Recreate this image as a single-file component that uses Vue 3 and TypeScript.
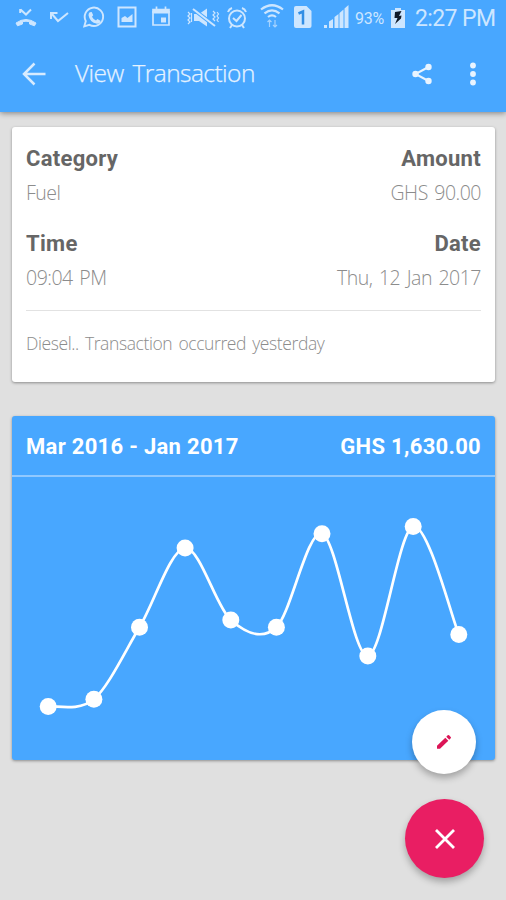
<script setup lang="ts">
interface Point {
  x: number
  y: number
}

const points: Point[] = [
  { x: 36.2, y: 290.5 },
  { x: 81.9, y: 283.3 },
  { x: 127.5, y: 211.3 },
  { x: 173.1, y: 132 },
  { x: 218.8, y: 204 },
  { x: 264.4, y: 211.3 },
  { x: 310, y: 117.7 },
  { x: 355.8, y: 240 },
  { x: 401.2, y: 110.4 },
  { x: 446.8, y: 218.5 },
]

const SMOOTHNESS = 0.16

function smoothPath(list: Point[]): string {
  let d = `M${list[0].x} ${list[0].y}`
  for (let i = 1; i < list.length; i++) {
    const before = list[Math.max(i - 2, 0)]
    const from = list[i - 1]
    const to = list[i]
    const after = list[Math.min(i + 1, list.length - 1)]
    const c1x = from.x + SMOOTHNESS * (to.x - before.x)
    const c1y = from.y + SMOOTHNESS * (to.y - before.y)
    const c2x = to.x - SMOOTHNESS * (after.x - from.x)
    const c2y = to.y - SMOOTHNESS * (after.y - from.y)
    d += ` C${c1x} ${c1y} ${c2x} ${c2y} ${to.x} ${to.y}`
  }
  return d
}

const linePath = smoothPath(points)
</script>

<template>
  <div class="screen">
    <header class="top">
      <div class="status">
        <svg class="notifications" width="180" height="36" viewBox="0 0 180 36" fill="none" stroke="currentColor" stroke-width="2">
          <path d="M20.500 9.500l5.500 5 5-5M20.200 9v4" />
          <path d="M16 23q10-7 20 0l-1.500 2.800-5-1.800v-2.300q-3.500-1-7 0v2.300l-5 1.800z" fill="currentColor" stroke-width="1" />
          <path d="M51 19v-6h6.500M51.500 13.500l6.500 7.500 10-8" />
          <path d="M84.300 26.300l1.500-5.200a9.200 9.200 0 1 1 3.600 3.700z" stroke-width="1.900" />
          <path d="M89.700 12.300l2-.3 1.500 3.300-1.200 1.500q1.300 2.600 4 3.800l1.400-1.500 3.100 1.600q0 3-3.500 3-7.500-1.500-8.500-8.500 0-2 1.200-2.900z" fill="currentColor" stroke="none" />
          <path d="M118.500 7.500h17v19h-17z" />
          <path d="M121.500 22v-4l3.500-2 2.500 2 5-4v8z" fill="currentColor" stroke="none" />
          <path d="M153 9.500h16v15.500h-16zM152 12h18M156.500 6.500v5M165.500 6.500v5" stroke-width="1.700" />
          <path d="M153 9.500h16v4h-16zM161 17.500h5v5h-5z" fill="currentColor" stroke="none" />
        </svg>
        <svg class="system" width="166" height="36" viewBox="184 0 166 36" fill="none" stroke="currentColor" stroke-width="1.700">
          <path d="M194 14h5l8-5.500v18l-8-5.500h-5z" fill="currentColor" stroke="none" />
          <path d="M193 9l22 17" stroke="#48a7ff" stroke-width="4" />
          <path d="M193 9l22 17" stroke-width="2" />
          <path d="M188 12l2 2-2 2 2 2-2 2 2 2-2 2M191.500 13v9M213 11l2 2-2 2 2 2-2 2 2 2M217 12l1.500 2-1.500 2 1.500 2-1.500 2 1.500 2" stroke-width="1.200" />
          <circle cx="237" cy="18.500" r="8" stroke-width="2" />
          <path d="M233 18l3.500 3 5-6M228 12q1-3 4-4M246 12q-1-3-4-4M232 25l-2 3M242 25l2 3" stroke-width="2" />
          <path d="M261 9.500q11-8.500 22 0M264.500 13.300q7.500-6 15 0M268 17q4-3.200 8 0" stroke-width="2.200" />
          <path d="M269.500 20v7M267.500 22l2-2 2 2M275 20v7M273 25l2 2 2-2" stroke-width="1.200" opacity=".7" />
          <path d="M294 8q0-2 2-2h10.500l5 5v15q0 2-2 2h-13.500q-2 0-2-2z" fill="currentColor" stroke="none" />
          <path d="M298.500 13.500l4.500-2v13" stroke="#328ee5" stroke-width="2.500" />
          <path d="M324 28v-3h3v3zM329 28v-6.500l4-2.500v9zM334.500 28v-11l4-3v14zM339.500 28v-15l4-3.500v18.500zM344.500 28v-19.500l4-3.500v23z" fill="currentColor" stroke="none" />
        </svg>
        <span class="percent">93%</span>
        <svg class="battery" width="14" height="20" viewBox="0 0 14 20">
          <path d="M0 2h4v-2h6v2h4v18h-14z" fill="currentColor" />
          <path d="M10.500 3l-6.500 1-.5 6h3l-2.500 6 6-5.500.5-3-2.500.5z" fill="#101a28" />
        </svg>
        <span class="clock">2:27 PM</span>
      </div>
      <div class="toolbar">
        <svg class="back" width="24" height="24" viewBox="0 0 24 24" fill="none" stroke="currentColor" stroke-width="2.500">
          <path d="M12.500 1.500L2 12l10.500 10.500M2 12h21.500" />
        </svg>
        <h1 class="title">View Transaction</h1>
        <svg class="share" width="21" height="22" viewBox="0 0 21 22" fill="currentColor">
          <path d="M16.500 4L3.500 11l13 7" fill="none" stroke="currentColor" stroke-width="2" />
          <circle cx="16.500" cy="4" r="3.200" /><circle cx="3.500" cy="11" r="3.200" /><circle cx="16.500" cy="18" r="3.200" />
        </svg>
        <svg class="more" width="8" height="24" viewBox="0 0 8 24" fill="currentColor">
          <circle cx="4" cy="3.500" r="2.900" /><circle cx="4" cy="12" r="2.900" /><circle cx="4" cy="20.500" r="2.900" />
        </svg>
      </div>
    </header>

    <main class="content">
      <section class="card details">
        <div class="row labels"><span>Category</span><span>Amount</span></div>
        <div class="row values"><span>Fuel</span><span>GHS 90.00</span></div>
        <div class="row labels"><span>Time</span><span>Date</span></div>
        <div class="row values"><span>09:04 PM</span><span>Thu, 12 Jan 2017</span></div>
        <p class="note">Diesel.. Transaction occurred yesterday</p>
      </section>

      <section class="card chart">
        <div class="row chart-head"><span>Mar 2016 - Jan 2017</span><span>GHS 1,630.00</span></div>
        <svg class="plot" width="483" height="283" viewBox="0 61 483 283">
          <path :d="linePath" fill="none" stroke="#fff" stroke-width="2.700" />
          <circle v-for="p in points" :key="p.x" :cx="p.x" :cy="p.y" r="8.500" fill="#fff" />
        </svg>
      </section>
    </main>

    <div class="actions">
      <button class="fab edit" aria-label="Edit">
        <svg width="16" height="16" viewBox="0 0 16 16" fill="currentColor">
          <path d="M1 11.800l8.300-8.100 3 3L4 14.800H1zM10.300 2.700l1.400-1.400q.7-.7 1.400 0l1.600 1.600q.7.700 0 1.400l-1.400 1.400z" />
        </svg>
      </button>
      <button class="fab close" aria-label="Close">
        <svg width="20" height="20" viewBox="0 0 20 20" fill="none" stroke="currentColor" stroke-width="2.800">
          <path d="M1 1l18 18M19 1L1 19" />
        </svg>
      </button>
    </div>
  </div>
</template>

<style>
body {
  margin: 0;
}
</style>

<style scoped>
.screen {
  position: relative;
  width: 506px;
  height: 900px;
  overflow: hidden;
  background: #e0e0e0;
  font-family: Roboto, sans-serif;
}
.top {
  position: relative;
  height: 112px;
  background: #48a7ff;
  box-shadow: 0 1px 6px rgba(0, 0, 0, 0.45);
}
.status {
  display: flex;
  align-items: center;
  height: 36px;
  color: #cde6ff;
}
.system {
  margin-left: 4px;
}
.percent {
  width: 31px;
  margin-left: 5px;
  font-size: 16px;
  letter-spacing: -0.3px;
}
.battery {
  margin-left: 5px;
}
.clock {
  margin-left: 10px;
  font-size: 23px;
  letter-spacing: -0.6px;
  white-space: nowrap;
}
.toolbar {
  display: flex;
  align-items: center;
  height: 75px;
  padding: 0 29px 0 22px;
  color: #d7ebff;
}
.title {
  margin: 0 auto 2px 29px;
  font: 300 24.500px/34px "Open Sans", sans-serif;
  letter-spacing: -0.55px;
  word-spacing: 3px;
  color: #e6f3ff;
  -webkit-text-stroke: 0.25px #e6f3ff;
  white-space: nowrap;
}
.share {
  margin-right: 36px;
  color: #e9f4ff;
}
.more {
  color: #e9f4ff;
}
.content {
  display: flex;
  flex-direction: column;
  gap: 34px;
  padding: 15px 11px 0 12px;
}
.card {
  box-sizing: border-box;
  border-radius: 3px;
  box-shadow: 0 1px 3px rgba(0, 0, 0, 0.38);
}
.details {
  height: 255px;
  padding: 14px 14px 0;
  background: #fff;
}
.row {
  display: flex;
  justify-content: space-between;
  white-space: nowrap;
}
.labels {
  font-size: 22px;
  font-weight: 700;
  letter-spacing: 0.3px;
  line-height: 35px;
  color: #666;
}
.values {
  height: 49.500px;
  font: 300 19.500px/34px "Open Sans", sans-serif;
  letter-spacing: -0.5px;
  word-spacing: 2px;
  color: #8c8c8c;
}
.note {
  margin: 0;
  padding-top: 15px;
  border-top: 1px solid #e2e2e2;
  font: 300 17.500px/34px "Open Sans", sans-serif;
  letter-spacing: -0.4px;
  word-spacing: 2px;
  color: #8c8c8c;
  white-space: nowrap;
}
.chart {
  height: 344px;
  background: #48a7ff;
}
.chart-head {
  box-sizing: border-box;
  height: 61px;
  padding: 1px 14px 0;
  border-bottom: 2px solid #91c9ff;
  font-size: 22px;
  font-weight: 700;
  letter-spacing: 0.3px;
  line-height: 60px;
  color: #fff;
}
.plot {
  display: block;
}
.actions {
  position: absolute;
  right: 22px;
  bottom: 22px;
  display: flex;
  flex-direction: column;
  align-items: center;
  gap: 25px;
}
.fab {
  display: flex;
  align-items: center;
  justify-content: center;
  padding: 0;
  border: 0;
  border-radius: 50%;
  box-shadow: 0 4px 7px rgba(0, 0, 0, 0.28);
}
.edit {
  width: 64px;
  height: 64px;
  margin-right: 2px;
  background: #fff;
  color: #dc1556;
}
.close {
  width: 79px;
  height: 79px;
  background: #e91e63;
  color: #fff;
}
</style>
